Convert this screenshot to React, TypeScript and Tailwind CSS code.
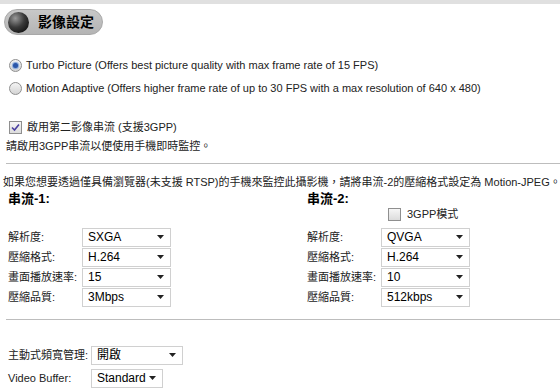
import React from 'react'

const font = { fontFamily: '"Liberation Sans", Arial, "Noto Sans CJK TC", sans-serif' }

function Radio({ checked }: { checked?: boolean }) {
  return (
    <span className="flex h-[13px] w-[13px] items-center justify-center rounded-full border border-[#8f8f8f] bg-gradient-to-b from-[#f4f4f4] to-[#d4d4d4]">
      {checked && <span className="h-[5px] w-[5px] rounded-full bg-[#2b56a8] shadow-[0_0_1px_1px_#7fa3d9]" />}
    </span>
  )
}

function Checkbox({ checked }: { checked?: boolean }) {
  return (
    <span className="flex h-[13px] w-[13px] items-center justify-center border border-[#8f8f8f] bg-gradient-to-b from-[#f6f6f6] to-[#dcdcdc]">
      {checked && (
        <svg width="9" height="9" viewBox="0 0 9 9">
          <path d="M1 4.5 L3.5 7 L8 1.5" fill="none" stroke="#4a3fa0" strokeWidth="1.6" />
        </svg>
      )}
    </span>
  )
}

function Select({ value, w }: { value: string; w: string }) {
  return (
    <div className={`flex h-[19px] items-center justify-between whitespace-nowrap border border-[#d0d0d0] bg-white pl-[5px] pr-[6px] text-[12px] text-black ${w}`}>
      <span>{value}</span>
      <svg width="7" height="4" viewBox="0 0 7 4">
        <path d="M0 0 H7 L3.5 4 Z" fill="#222" />
      </svg>
    </div>
  )
}

function Row({ label, value }: { label: string; value: string }) {
  return (
    <div className="flex h-[20px] items-center">
      <span className="w-[74px] whitespace-nowrap text-[11px]">{label}</span>
      <Select value={value} w="w-[89px]" />
    </div>
  )
}

export default function App() {
  return (
    <div className="h-[389px] w-[560px] overflow-hidden bg-white text-[#222]" style={font}>
      <div className="h-[4px] bg-[#e0e0e0]" />

      {/* Header */}
      <div className="ml-[4px] mt-[5px] flex h-[26px] w-[99px] items-center rounded-full border border-[#a8a8a8] bg-gradient-to-b from-[#c8c8c8] to-[#b4b4b4] pl-[3px]">
        <span className="h-[21px] w-[21px] rounded-full bg-[radial-gradient(circle_at_35%_30%,#9a9a9a,#3a3a3a_45%,#000)]" />
        <span className="ml-[9px] text-[14px] font-bold text-black">影像設定</span>
      </div>

      {/* Mode radios */}
      <div className="mt-[22px] flex h-[16px] items-center gap-[4px] pl-[9px] text-[11px]">
        <Radio checked />
        <span>Turbo Picture (Offers best picture quality with max frame rate of 15 FPS)</span>
      </div>
      <div className="mt-[7px] flex h-[16px] items-center gap-[4px] pl-[9px] text-[11px]">
        <Radio />
        <span>Motion Adaptive (Offers higher frame rate of up to 30 FPS with a max resolution of 640 x 480)</span>
      </div>

      {/* Second stream */}
      <div className="mt-[23px] flex h-[16px] items-center gap-[5px] pl-[9px] text-[11px]">
        <Checkbox checked />
        <span>啟用第二影像串流 (支援3GPP)</span>
      </div>
      <div className="mt-[3px] h-[16px] pl-[6px] text-[11px] leading-[16px]">請啟用3GPP串流以便使用手機即時監控。</div>

      <div className="ml-[6px] mt-[9px] h-[1px] bg-[#bdbdbd]" />

      <div className="mt-[10px] h-[16px] whitespace-nowrap pl-[3px] text-[11px] leading-[16px]">
        如果您想要透過僅具備瀏覽器(未支援 RTSP)的手機來監控此攝影機，請將串流-2的壓縮格式設定為 Motion-JPEG。
      </div>

      {/* Streams */}
      <div className="flex">
        <div className="w-[299px] pl-[8px]">
          <div className="mt-[1px] h-[16px] text-[13px] font-bold leading-[16px] text-black">串流-1:</div>
          <div className="mt-[20px]">
            <Row label="解析度:" value="SXGA" />
            <Row label="壓縮格式:" value="H.264" />
            <Row label="畫面播放速率:" value="15" />
            <Row label="壓縮品質:" value="3Mbps" />
          </div>
        </div>
        <div className="pl-[8px]">
          <div className="mt-[1px] h-[16px] text-[13px] font-bold leading-[16px] text-black">串流-2:</div>
          <div className="ml-[81px] flex h-[14px] items-center gap-[6px] text-[11px]">
            <Checkbox />
            <span>3GPP模式</span>
          </div>
          <div className="mt-[6px]">
            <Row label="解析度:" value="QVGA" />
            <Row label="壓縮格式:" value="H.264" />
            <Row label="畫面播放速率:" value="10" />
            <Row label="壓縮品質:" value="512kbps" />
          </div>
        </div>
      </div>

      <div className="ml-[6px] mt-[12px] h-[1px] bg-[#bdbdbd]" />

      {/* Bandwidth */}
      <div className="mt-[24px] pl-[8px]">
        <div className="flex h-[22px] items-center">
          <span className="w-[83px] whitespace-nowrap text-[11px]">主動式頻寬管理:</span>
          <Select value="開啟" w="w-[92px]" />
        </div>
        <div className="mt-[1px] flex h-[22px] items-center">
          <span className="w-[83px] whitespace-nowrap text-[11px]">Video Buffer:</span>
          <Select value="Standard" w="w-[72px]" />
        </div>
      </div>
    </div>
  )
}
